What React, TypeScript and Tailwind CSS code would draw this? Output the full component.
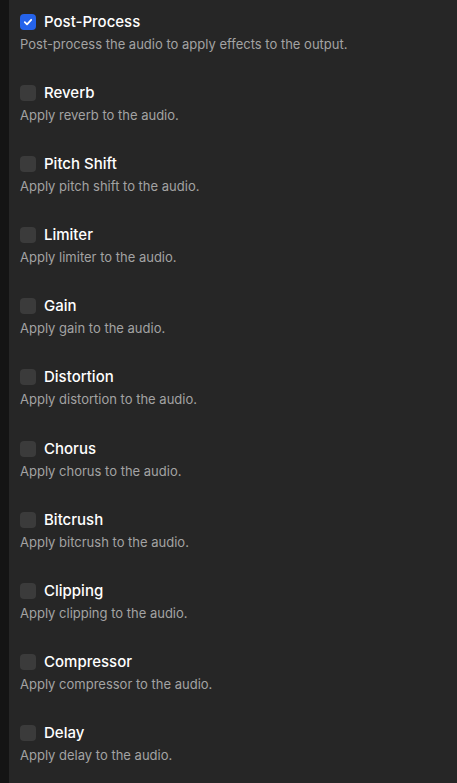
import React from "react";

const items = [
  { t: "Post-Process", d: "Post-process the audio to apply effects to the output.", c: true },
  { t: "Reverb", d: "Apply reverb to the audio." },
  { t: "Pitch Shift", d: "Apply pitch shift to the audio." },
  { t: "Limiter", d: "Apply limiter to the audio." },
  { t: "Gain", d: "Apply gain to the audio." },
  { t: "Distortion", d: "Apply distortion to the audio." },
  { t: "Chorus", d: "Apply chorus to the audio." },
  { t: "Bitcrush", d: "Apply bitcrush to the audio." },
  { t: "Clipping", d: "Apply clipping to the audio." },
  { t: "Compressor", d: "Apply compressor to the audio." },
  { t: "Delay", d: "Apply delay to the audio." },
];

export default function App() {
  return (
    <div
      className="flex h-[783px] w-full overflow-hidden bg-[#262626]"
      style={{ fontFamily: "Inter, 'Noto Sans', sans-serif" }}
    >
      <div className="w-[9px] shrink-0 bg-[#141414]" />
      <div className="flex flex-col gap-[29.1px] pl-[11px] pt-[12px]">
        {items.map((it) => (
          <div key={it.t} className="flex flex-col">
            <div className="flex h-[20px] items-center gap-[8px]">
              {it.c ? (
                <div className="flex h-[16px] w-[16px] items-center justify-center rounded-[4px] bg-[#2563eb]">
                  <svg width="10" height="10" viewBox="0 0 10 10" fill="none">
                    <path d="M1.8 5.2 L4 7.3 L8.2 2.8" stroke="white" strokeWidth="1.8" strokeLinecap="round" strokeLinejoin="round" />
                  </svg>
                </div>
              ) : (
                <div className="h-[16px] w-[16px] rounded-[4px] bg-[#3b3b3b]" />
              )}
              <span className="text-[15px] font-[450] leading-[20px] text-white">{it.t}</span>
            </div>
            <div className="mt-[2px] text-[13px] leading-[20px] text-[#a3a3a3]">{it.d}</div>
          </div>
        ))}
      </div>
    </div>
  );
}
